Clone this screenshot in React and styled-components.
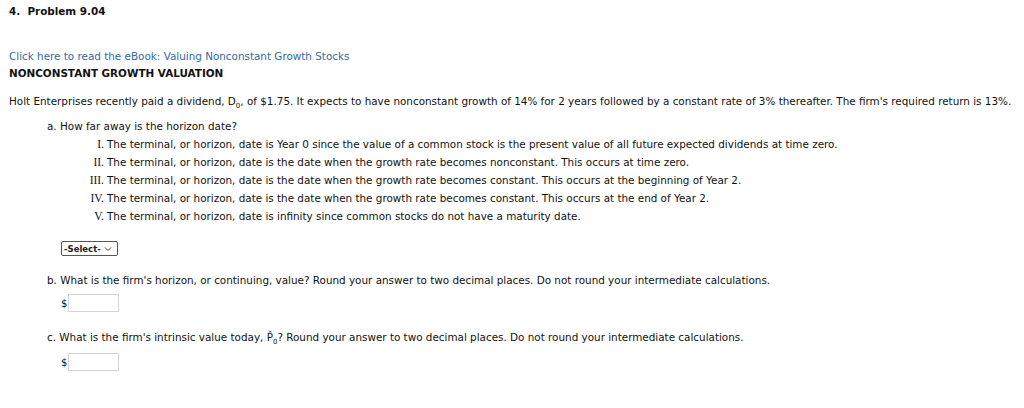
import React from "react";
import styled, { createGlobalStyle } from "styled-components";

const Global = createGlobalStyle`
  body {
    margin: 0;
    background: #fff;
    font-family: "DejaVu Sans", Verdana, sans-serif;
    font-size: 10.4px;
    color: #111;
  }
`;

const Page = styled.div`
  padding: 4px 9px 0 9px;
  display: flex;
  flex-direction: column;
`;

const ProblemTitle = styled.div`
  font-weight: bold;
  line-height: 14px;
  height: 14px;
`;

const Link = styled.a`
  margin-top: 31px;
  color: #2f6aa8;
  text-decoration: none;
  line-height: 14px;
  cursor: pointer;
`;

const Heading = styled.div`
  margin-top: 3px;
  font-weight: bold;
  line-height: 14px;
`;

const Para = styled.p`
  margin: 14px 0 0 0;
  line-height: 14px;
`;

const Sub = styled.sub`
  font-size: 7px;
  line-height: 0;
`;

const Question = styled.div`
  margin: ${(p) => p.$top}px 0 0 38px;
  line-height: 14px;
`;

const Options = styled.div`
  margin: 2px 0 0 0;
  display: grid;
  grid-template-columns: 98px 1fr;
  grid-auto-rows: 18px;
  align-items: center;
`;

const Numeral = styled.span`
  font-family: "Liberation Serif", "Times New Roman", serif;
  font-size: 11.5px;
  text-align: right;
  padding-right: 3px;
`;

const OptionText = styled.span``;

const SelectBox = styled.div`
  margin: 16px 0 0 52px;
  width: 53px;
  height: 13px;
  border: 1px solid #555;
  border-radius: 2px;
  display: flex;
  align-items: center;
  gap: 3px;
  padding-left: 2px;
  box-sizing: content-box;
  font-size: 8.5px;
  font-weight: bold;
  color: #222;
`;

const AnswerRow = styled.div`
  margin: ${(p) => p.$top}px 0 0 52px;
  display: flex;
  align-items: center;
  gap: 1px;
`;

const Dollar = styled.span`
  font-size: 10px;
`;

const Input = styled.div`
  width: 49px;
  height: 16px;
  border: 1px solid #d4d4d4;
  background: #fff;
`;

const Chevron = () => (
  <svg width="8" height="6" viewBox="0 0 8 6">
    <path d="M1 1.5 L4 4.5 L7 1.5" fill="none" stroke="#333" strokeWidth="1" />
  </svg>
);

const options = [
  ["I.", "The terminal, or horizon, date is Year 0 since the value of a common stock is the present value of all future expected dividends at time zero."],
  ["II.", "The terminal, or horizon, date is the date when the growth rate becomes nonconstant. This occurs at time zero."],
  ["III.", "The terminal, or horizon, date is the date when the growth rate becomes constant. This occurs at the beginning of Year 2."],
  ["IV.", "The terminal, or horizon, date is the date when the growth rate becomes constant. This occurs at the end of Year 2."],
  ["V.", "The terminal, or horizon, date is infinity since common stocks do not have a maturity date."],
];

export default function App() {
  return (
    <>
      <Global />
      <Page>
        <ProblemTitle>4.&nbsp; Problem 9.04</ProblemTitle>
        <Link>Click here to read the eBook: Valuing Nonconstant Growth Stocks</Link>
        <Heading>NONCONSTANT GROWTH VALUATION</Heading>
        <Para>
          Holt Enterprises recently paid a dividend, D<Sub>0</Sub>, of $1.75. It expects to have nonconstant growth of 14% for 2 years followed by a constant rate of 3% thereafter. The firm's required return is 13%.
        </Para>
        <Question $top={11}>a. How far away is the horizon date?</Question>
        <Options>
          {options.map(([n, t]) => (
            <React.Fragment key={n}>
              <Numeral>{n}</Numeral>
              <OptionText>{t}</OptionText>
            </React.Fragment>
          ))}
        </Options>
        <SelectBox>
          -Select- <Chevron />
        </SelectBox>
        <Question $top={17}>b. What is the firm's horizon, or continuing, value? Round your answer to two decimal places. Do not round your intermediate calculations.</Question>
        <AnswerRow $top={7}>
          <Dollar>$</Dollar>
          <Input />
        </AnswerRow>
        <Question $top={18}>c. What is the firm's intrinsic value today, P̂<Sub>0</Sub>? Round your answer to two decimal places. Do not round your intermediate calculations.</Question>
        <AnswerRow $top={9}>
          <Dollar>$</Dollar>
          <Input />
        </AnswerRow>
      </Page>
    </>
  );
}
